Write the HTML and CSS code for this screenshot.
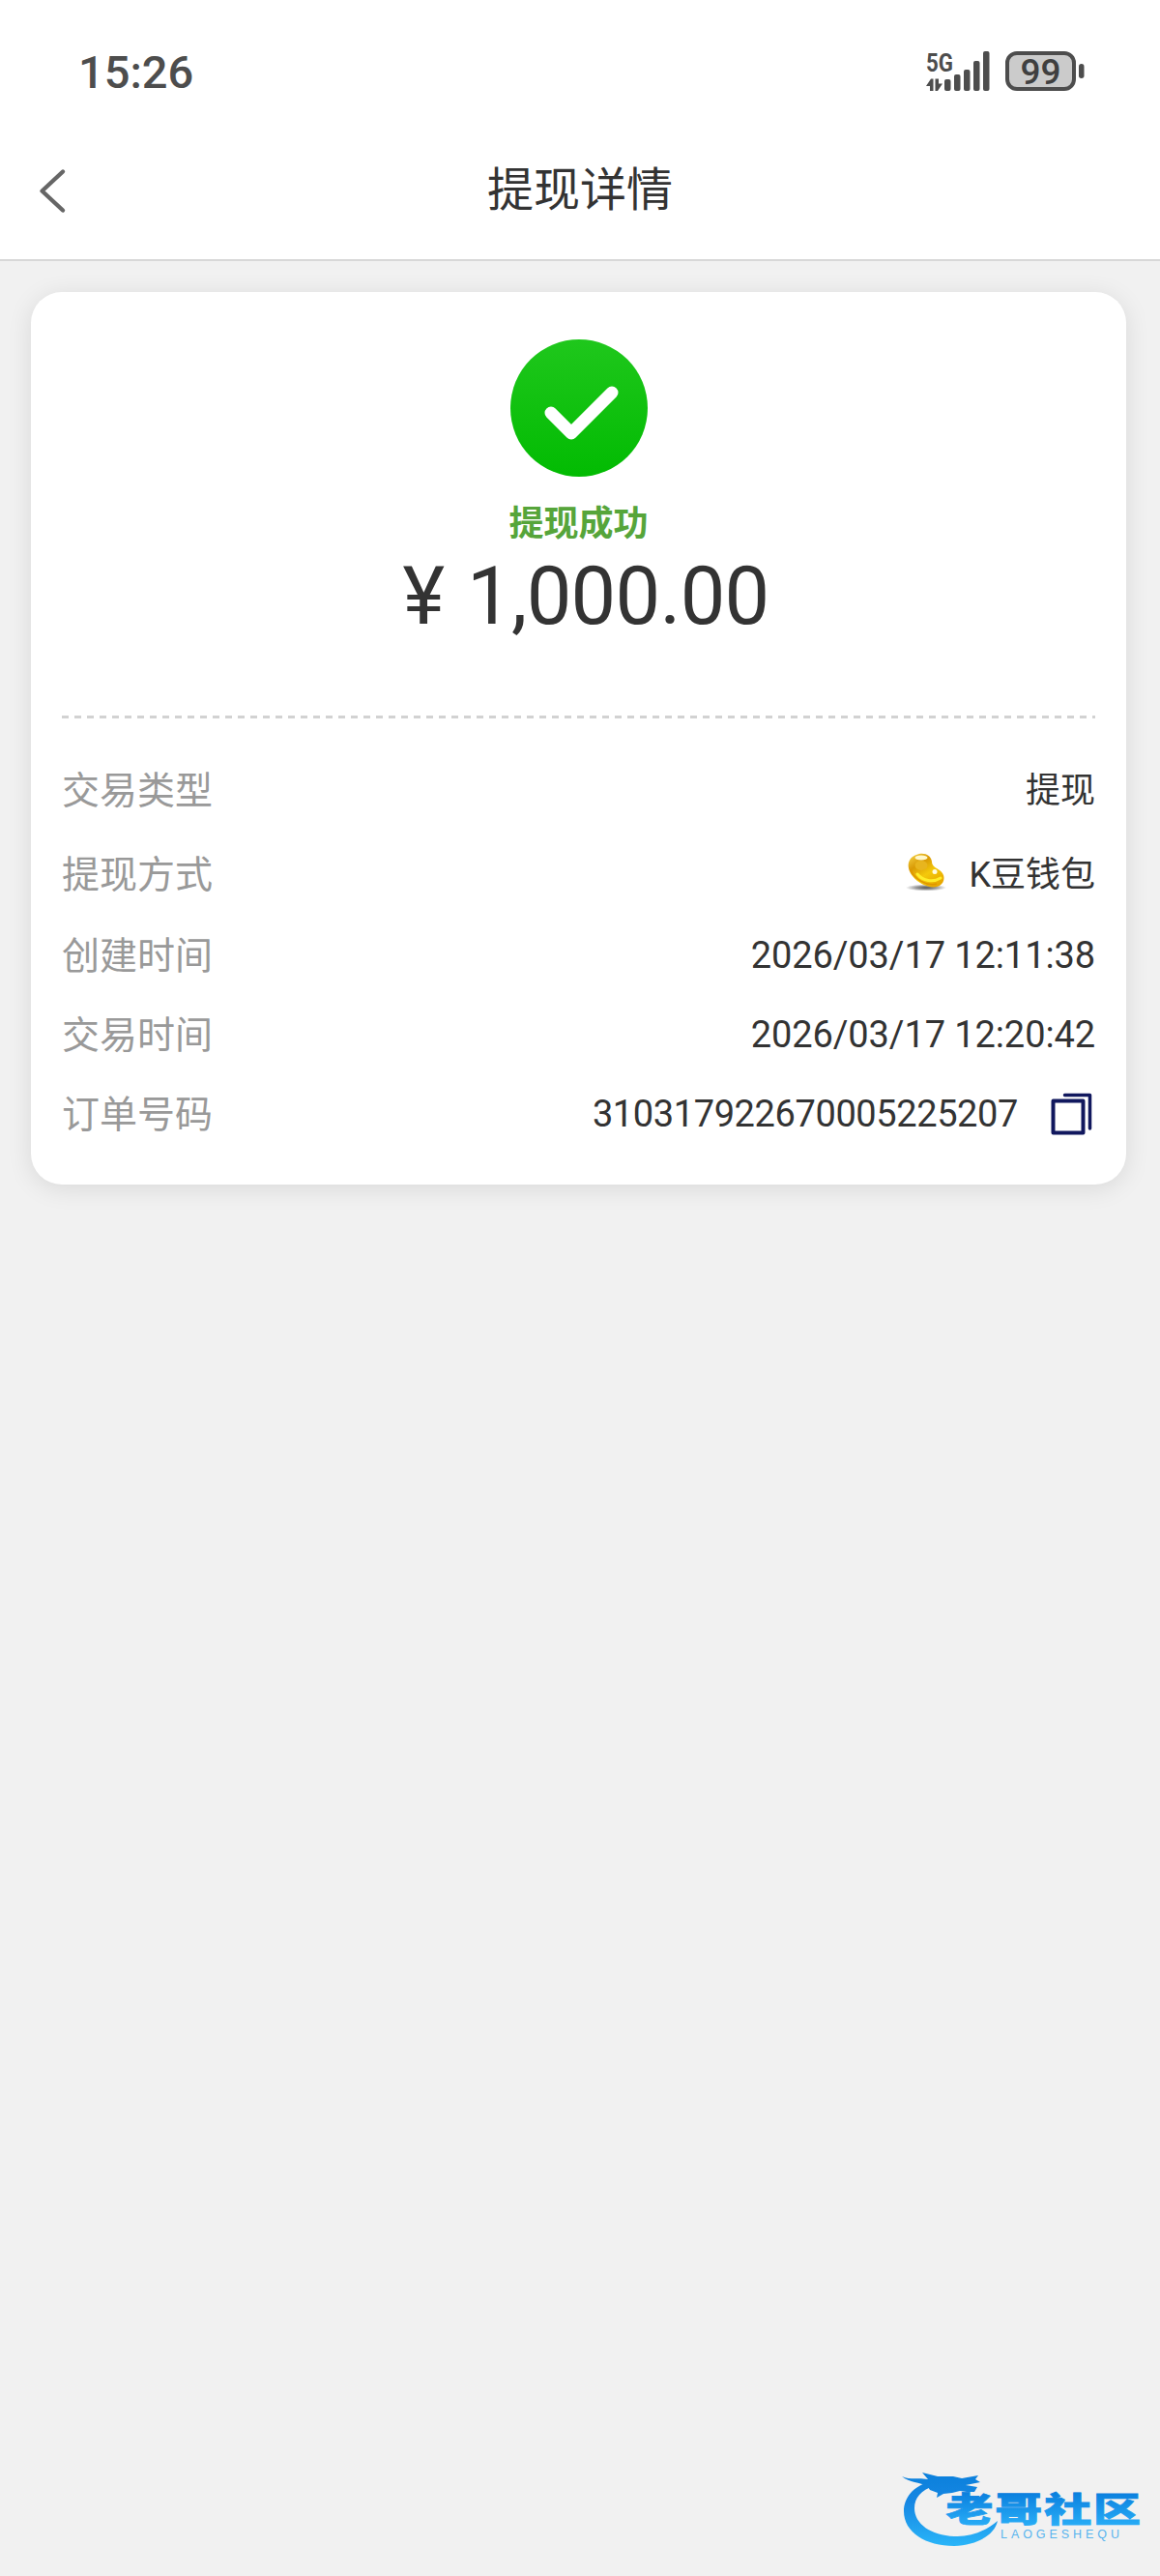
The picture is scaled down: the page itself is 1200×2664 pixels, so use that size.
FILE: index.html
```html
<!DOCTYPE html>
<html lang="zh-CN">

<head>
    <meta charset="UTF-8">
    <meta name="viewport" content="width=device-width, initial-scale=1.0">
    <title>提现详情</title>
    <link rel="stylesheet" href="styles.css">
</head>

<body>
    <header>
        <div class="status-bar">
            <span class="time">15:26</span>
            <svg class="status-icons" width="168" height="44" viewBox="0 0 168 44">
                <text class="network" x="1" y="21.5" textLength="28" lengthAdjust="spacingAndGlyphs">5G</text>
                <g fill="#4d4d4d">
                    <path d="M1 37 L6 29.5 H8.5 V42 H5 V37 Z" />
                    <path d="M10.500 29.500 H14 V34.500 H18 L13 42 H10.500 Z" />
                    <rect x="20" y="30" width="6.500" height="12" rx="2" />
                    <rect x="30" y="25" width="6.500" height="17" rx="2" />
                    <rect x="40" y="20" width="6.500" height="22" rx="2" />
                    <rect x="50" y="11" width="6.500" height="31" rx="2" />
                    <rect x="60" y="1" width="6.500" height="41" rx="2" />
                    <rect x="159" y="14" width="5.500" height="15" rx="2.700" />
                </g>
                <rect x="85" y="3" width="69" height="37" rx="10" fill="#cbcbcb" stroke="#4d4d4d" stroke-width="4" />
                <text class="battery" x="98.500" y="35" textLength="42">99</text>
            </svg>
        </div>
        <nav class="nav-bar">
            <svg class="back" width="30" height="48" viewBox="0 0 30 48">
                <path d="M26 4.500 L4.500 24.500 L26 44.500" fill="none" stroke="#666" stroke-width="4.400" stroke-linecap="round" stroke-linejoin="round" />
            </svg>
            <h1>提现详情</h1>
        </nav>
    </header>

    <main class="card">
        <section class="result">
            <svg class="success" width="142" height="142" viewBox="0 0 142 142">
                <defs>
                    <linearGradient id="green" x1="0" y1="0" x2="0" y2="1">
                        <stop offset="0" stop-color="#1fc71c" />
                        <stop offset="1" stop-color="#02bb02" />
                    </linearGradient>
                </defs>
                <circle cx="71" cy="71" r="71" fill="url(#green)" />
                <path d="M42 76 L63 97 L105 55" fill="none" stroke="#fff" stroke-width="13" stroke-linecap="round" stroke-linejoin="round" />
            </svg>
            <p class="result-text">提现成功</p>
            <p class="amount"><span>¥</span><span class="sum">1,000.00</span></p>
        </section>

        <div class="divider"></div>

        <ul class="details">
            <li class="tall">
                <span class="label">交易类型</span>
                <span class="value">提现</span>
            </li>
            <li class="tall">
                <span class="label">提现方式</span>
                <span class="value">
                    <svg class="bean" width="44" height="42" viewBox="0 0 44 42">
                        <defs>
                            <linearGradient id="gold" x1="0" y1="0" x2="0.700" y2="1">
                                <stop offset="0" stop-color="#f8d84a" />
                                <stop offset="0.350" stop-color="#d99a05" />
                                <stop offset="0.650" stop-color="#f4c90b" />
                                <stop offset="1" stop-color="#e8a800" />
                            </linearGradient>
                            <radialGradient id="shade">
                                <stop offset="0" stop-color="#555" />
                                <stop offset="0.500" stop-color="#999" />
                                <stop offset="1" stop-color="#fff" />
                            </radialGradient>
                        </defs>
                        <ellipse cx="22" cy="38" rx="21" ry="3.500" fill="url(#shade)" />
                        <path d="M15 3 C22 2 27 5 28 11 C28 16 32 17 36 20 C42 24 42 32 36 36 C28 40 15 35 8 26 C1 17 2 6 15 3 Z" fill="url(#gold)" />
                        <path d="M6 19 C9 29 23 37 33 34" fill="none" stroke="#e09500" stroke-width="1.500" />
                        <path d="M13 24 C19 31 29 33 37 28" fill="none" stroke="#ffed2a" stroke-width="3" stroke-linecap="round" />
                        <ellipse cx="17" cy="15" rx="6.500" ry="5" fill="#e8b51e" />
                        <ellipse cx="17" cy="7" rx="6.500" ry="2.500" fill="#fff8cc" />
                        <circle cx="31" cy="21.500" r="2.500" fill="#fffbe0" />
                    </svg>
                    K豆钱包
                </span>
            </li>
            <li>
                <span class="label">创建时间</span>
                <span class="value number">2026/03/17 12:11:38</span>
            </li>
            <li>
                <span class="label">交易时间</span>
                <span class="value number">2026/03/17 12:20:42</span>
            </li>
            <li>
                <span class="label">订单号码</span>
                <span class="value number order">310317922670005225207
                    <svg class="copy" width="44" height="44" viewBox="0 0 44 44" fill="none" stroke="#11185e" stroke-linecap="round" stroke-linejoin="round">
                        <rect x="3.500" y="8.500" width="31" height="33" stroke-width="4" />
                        <path d="M15.500 2.500 H41.500 V37" stroke-width="3.500" />
                    </svg>
                </span>
            </li>
        </ul>
    </main>

    <footer>
        <svg class="logo" width="250" height="84" viewBox="0 0 250 84">
            <defs>
                <linearGradient id="blue" gradientUnits="userSpaceOnUse" x1="0" y1="4" x2="0" y2="78">
                    <stop offset="0" stop-color="#0b80dc" />
                    <stop offset="0.400" stop-color="#1687e3" />
                    <stop offset="1" stop-color="#29b4f8" />
                </linearGradient>
                <linearGradient id="blue-text" x1="0" y1="0.200" x2="0" y2="0.900">
                    <stop offset="0" stop-color="#0a7fde" />
                    <stop offset="1" stop-color="#29aef7" />
                </linearGradient>
            </defs>
            <g fill="url(#blue)">
                <path d="M28 13 C12 17 2 29 2 43 C2 65 25 79 54 79 C77 78 96 68 99 53 C86 64 70 70 54 69 C30 68 13 56 13 40 C13 29 20 21 33 17 Z" />
                <path d="M0 7 C9 11 17 8 27 10 L21 3 L37 7 L53 7 L62 9 L79 6 L76 10 L81 13 L66 16 L78 18 L75 23 L67 23 L60 22 L52 24 L43 25 L36 29 L37 24 L29 21 L27 18 C18 12 8 14 0 7 Z" />
            </g>
            <text class="logo-name" x="32.500" y="54" transform="scale(1.400 1)" textLength="144" fill="url(#blue-text)" stroke="url(#blue-text)">老哥社区</text>
            <text class="logo-sub" x="102" y="71" textLength="123">LAOGESHEQU</text>
        </svg>
    </footer>
</body>

</html>
```

FILE: styles.css
```css
* {
    box-sizing: border-box;
    margin: 0;
    padding: 0;
}

body {
    display: flex;
    flex-direction: column;
    min-height: 2664px;
    background: #f1f1f1;
    color: #333;
    font-family: Roboto, "Noto Sans CJK SC", sans-serif;
}

svg {
    display: block;
    flex-shrink: 0;
    overflow: visible;
}

header {
    height: 270px;
    background: #fff;
    border-bottom: 2px solid #d8d8d8;
}

.status-bar {
    display: flex;
    justify-content: space-between;
    align-items: center;
    height: 126px;
    padding: 22px 75px 0 81px;
}

.time {
    font-size: 47px;
    font-weight: 500;
    color: #4d4d4d;
}

.network {
    font-size: 25px;
    font-weight: 700;
    fill: #4d4d4d;
}

.battery {
    font-size: 37px;
    font-weight: 500;
    fill: #404040;
}

.nav-bar {
    display: grid;
    grid-template-columns: 80px 1fr 80px;
    align-items: center;
    height: 142px;
}

.back {
    margin-left: 39px;
}

h1 {
    font-size: 48px;
    font-weight: 400;
    line-height: 72px;
    text-align: center;
}

.card {
    width: 1133px;
    height: 923px;
    margin: 32px 0 0 32px;
    padding: 49px 32px 0;
    background: #fff;
    border-radius: 32px;
    box-shadow: 0 4px 26px rgba(0, 0, 0, 0.1);
}

.result {
    display: flex;
    flex-direction: column;
    align-items: center;
    height: 389px;
}

.result-text {
    margin-top: 22px;
    font-size: 36px;
    font-weight: 700;
    line-height: 54px;
    color: #56a53a;
}

.amount {
    display: flex;
    gap: 23px;
    margin-left: 15px;
    font-size: 83px;
    line-height: 96px;
}

.sum {
    letter-spacing: -0.7px;
}

.divider {
    height: 3px;
    background: repeating-linear-gradient(90deg, #d2d2d2 0, #d2d2d2 7px, transparent 7px, transparent 13px);
}

.details {
    padding-top: 27px;
    list-style: none;
}

.details li {
    display: flex;
    justify-content: space-between;
    align-items: center;
    height: 82px;
}

.details .tall {
    height: 87px;
}

.label {
    font-size: 39px;
    color: #999;
}

.value {
    display: flex;
    align-items: center;
    font-size: 36px;
}

.number {
    padding-top: 5px;
    font-size: 38px;
    letter-spacing: -0.1px;
}

.order {
    padding-right: 3px;
    letter-spacing: -0.4px;
}

.bean {
    margin-right: 22px;
}

.copy {
    margin-left: 33px;
}

footer {
    display: flex;
    justify-content: flex-end;
    margin-top: auto;
    padding: 0 17px 26px 0;
}

.logo-name {
    font-family: "Noto Sans CJK SC", sans-serif;
    font-size: 35px;
    font-weight: 900;
    stroke-width: 0.8px;
}

.logo-sub {
    font-family: "Liberation Sans", sans-serif;
    font-size: 12.5px;
    fill: #58b4ee;
}
```
